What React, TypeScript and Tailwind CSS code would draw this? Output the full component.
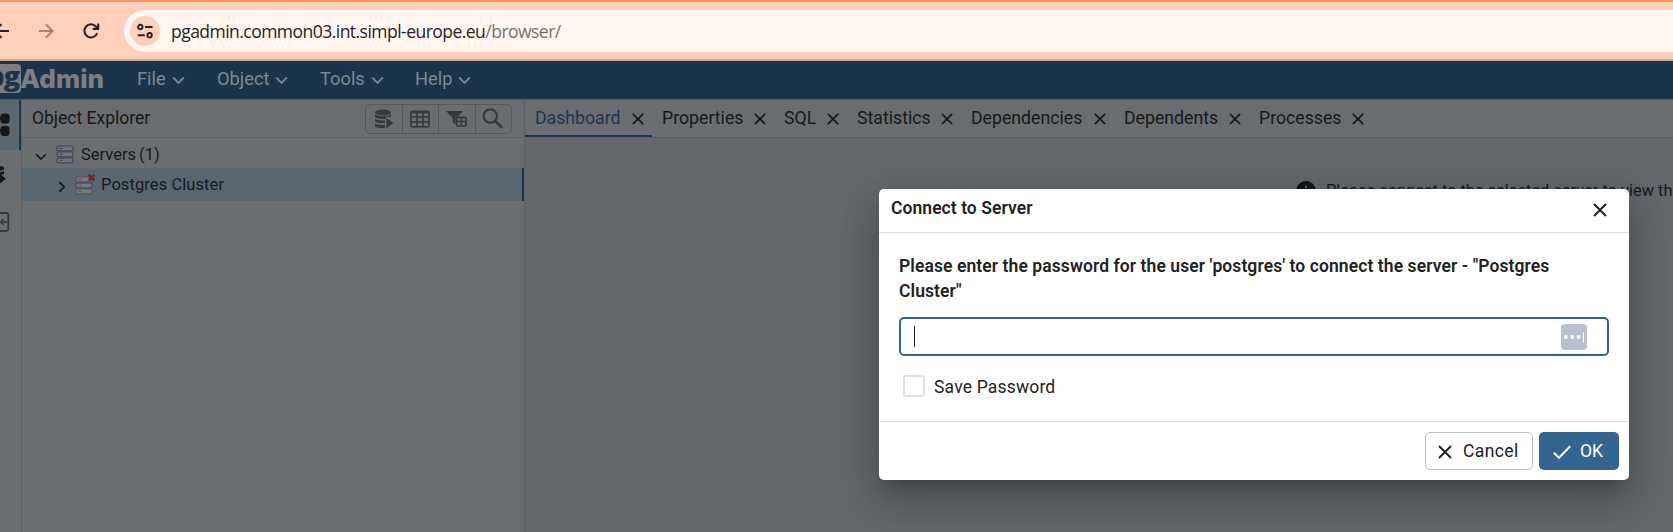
import type { ReactNode } from "react";

function Chevron({ className }: { className: string }) {
  return (
    <svg viewBox="0 0 14 9" className={className} fill="none" stroke="currentColor" strokeWidth="2">
      <path d="M1.3 1.3 7 7l5.7-5.7" />
    </svg>
  );
}

function Cross({ className }: { className: string }) {
  return (
    <svg viewBox="0 0 14 14" className={className} fill="none" stroke="currentColor" strokeWidth="2">
      <path d="M1 1l12 12M13 1 1 13" />
    </svg>
  );
}

function ServerStack({ className, disconnected }: { className: string; disconnected?: boolean }) {
  const edge = disconnected ? "#55565a" : "#45455a";
  return (
    <svg viewBox="0 0 18 19" className={className} fill="none">
      {[1, 7, 13].map((y, i) => (
        <g key={y}>
          <rect
            x="1"
            y={y}
            width="16"
            height="4.8"
            rx="1.6"
            fill={disconnected ? "#77797b" : "#70747e"}
            stroke={i === 1 ? "#45455a" : edge}
            strokeWidth="1.2"
          />
          <path d={`M3.5 ${y + 2.4}h3`} stroke={edge} strokeWidth="1.1" />
        </g>
      ))}
      {disconnected && (
        <path d="M13.800-1.200l5.600 5.600m0-5.600-5.600 5.600" stroke="#930f22" strokeWidth="2.500" />
      )}
    </svg>
  );
}

function BrowserBar() {
  return (
    <header className="flex h-[61px] shrink-0 items-start border-t-2 border-b-2 border-t-[#ff8f5c] border-b-[#cba797] bg-[#ffd0b9]">
      <div className="flex h-[57px] w-[124px] shrink-0 items-center">
        <svg viewBox="0 0 16 16" className="-ml-[7px] h-4 w-4" fill="none" stroke="#222426" strokeWidth="2">
          <path d="M16 8H2M8.5 1.2 1.7 8l6.8 6.8" />
        </svg>
        <svg viewBox="0 0 16 16" className="ml-[29px] h-4 w-4" fill="none" stroke="#a18579" strokeWidth="2">
          <path d="M1 8h13M7.8 1.2 14.6 8l-6.8 6.8" />
        </svg>
        <svg viewBox="0 0 18 18" className="ml-[28px] h-[18px] w-[18px]" fill="none" stroke="#222426" strokeWidth="2.1">
          <path d="M15.2 11.2A6.6 6.6 0 1 1 14 4.6L16 6.6" />
          <path d="M16.2 1.4v5.5h-5.5" />
        </svg>
      </div>
      <div className="mt-2 flex h-[42px] flex-1 items-center rounded-l-full bg-[#fff6f1] pl-[6px]">
        <span className="flex h-[30px] w-[30px] items-center justify-center rounded-full bg-[#ffd0b9]">
          <svg viewBox="0 0 16 16" className="h-4 w-4" fill="none" stroke="#222426" strokeWidth="1.9">
            <circle cx="3.3" cy="4" r="2.2" />
            <path d="M8 4h7.5M.8 12.2h7" />
            <circle cx="12.6" cy="12.2" r="2.2" />
          </svg>
        </span>
        <span className="ml-[11px] font-['Open_Sans','Noto_Sans',sans-serif] text-[17.5px] tracking-[-0.53px] whitespace-nowrap text-[#232323]">
          pgadmin.common03.int.simpl-europe.eu<span className="text-[#75706e]">/browser/</span>
        </span>
      </div>
    </header>
  );
}

function MenuItem({ label, width }: { label: string; width: string }) {
  return (
    <div className={`flex items-center gap-[6px] ${width}`}>
      <span>{label}</span>
      <Chevron className="mt-[3px] h-[9px] w-[13px]" />
    </div>
  );
}

function MenuBar() {
  return (
    <nav className="flex h-[38px] shrink-0 items-center bg-[#1b344a] pb-[3px] text-[18.3px] text-[#7f8991]">
      <div className="flex w-[137px] items-center">
        <span className="-ml-[20px] flex h-[29px] w-[41px] shrink-0 items-center justify-end rounded-[4px] bg-[#7b7f82] pr-[2px] font-['Open_Sans',sans-serif] text-[27px] leading-[20px] font-extrabold text-[#1b344a]">
          <span className="-mt-[5px] tracking-[-1px]">pg</span>
        </span>
        <span className="-ml-px font-['Inter','Lato',sans-serif] text-[26px] leading-[30px] font-extrabold tracking-[0.1px] text-[#7b7f82]">
          Admin
        </span>
      </div>
      <MenuItem label="File" width="w-[80px]" />
      <MenuItem label="Object" width="w-[103px]" />
      <MenuItem label="Tools" width="w-[95px]" />
      <MenuItem label="Help" width="w-[80px]" />
    </nav>
  );
}

function SideRail() {
  return (
    <aside className="w-[22px] shrink-0 overflow-hidden border-r border-[#5e6266]">
      <div className="flex h-[50px] items-center border-r-2 border-[#1b3750] bg-[#596870]">
        <svg viewBox="0 0 10 24" className="h-6 w-[10px]" fill="#131719">
          <rect x="0.5" y="0.5" width="9" height="10" rx="3" />
          <rect x="0.5" y="13" width="9" height="10" rx="3" />
          <path d="M0 4h2v3H0zM0 16h2v3H0z" />
        </svg>
      </div>
      <svg viewBox="0 0 8 20" className="mt-[15px] h-5 w-[8px]" fill="#131719">
        <path d="M0 1c2.500 0 4 .8 4 2.200S2.500 5.600 0 5.600zM0 7c2 0 3-.4 4-1.200v3.400L0 10zM0 9l6 4.800L0 18.500z" />
      </svg>
      <svg viewBox="0 0 10 20" className="mt-[27px] h-5 w-[10px]" fill="none" stroke="#35393b" strokeWidth="1.8">
        <path d="M0 1h6.500a1.800 1.800 0 0 1 1.800 1.800v14.400a1.800 1.800 0 0 1-1.800 1.800H0" />
        <path d="M7 10H1M3.600 7 .8 10l2.800 3" strokeWidth="1.500" />
      </svg>
    </aside>
  );
}

function ToolButton({ children }: { children: ReactNode }) {
  return (
    <span className="flex h-full flex-1 items-center justify-center border-l border-[#565a5d] first:border-l-0">
      {children}
    </span>
  );
}

function ObjectExplorer() {
  return (
    <section className="flex w-[503px] shrink-0 flex-col border-r border-[#5c6064]">
      <div className="flex h-[38px] items-center justify-between border-b border-[#5c6064] pr-3 pl-[10px]">
        <h2 className="-mt-px text-[17.5px] text-[#15191c]">Object Explorer</h2>
        <div className="flex h-[30px] w-[147px] rounded-[5px] border border-[#565a5d] text-[#34393c]">
          <ToolButton>
            <svg viewBox="0 0 20 20" className="h-5 w-5" fill="currentColor">
              <ellipse cx="9" cy="3.400" rx="8" ry="3" />
              <path d="M1 5.200c3 2.600 13 2.600 16 0v3.300l-5-1v2.200C8 10.200 3 9.700 1 8.200z" />
              <path d="M1 10c2 1.200 6 1.600 10 1.400v2.800c-4 .2-8-.3-10-1.500zM1 14.500c2 1.200 6 1.600 10 1.400V19c-4 .5-10-.2-10-2z" />
              <path d="M12.400 9l7 5-7 5.400z" />
            </svg>
          </ToolButton>
          <ToolButton>
            <svg viewBox="0 0 20 18" className="h-[18px] w-5" fill="none" stroke="currentColor" strokeWidth="1.600">
              <rect x="1" y="1.200" width="18" height="15.600" rx="1.400" />
              <path d="M1 2.200h18" strokeWidth="2.200" />
              <path d="M1 7h18M1 12h18M7 2v15M13 2v15" />
            </svg>
          </ToolButton>
          <ToolButton>
            <svg viewBox="0 0 21 18" className="h-[18px] w-[21px]" fill="none">
              <path d="M0 1h17l-5 5.500H9.600V15L6.600 12V8z" fill="currentColor" />
              <rect x="10.600" y="7.400" width="9.400" height="8.600" rx="1" fill="#6a6e71" stroke="currentColor" strokeWidth="1.700" />
              <path d="M10.600 11.600H20M15.300 8v8" stroke="currentColor" strokeWidth="1.500" />
            </svg>
          </ToolButton>
          <ToolButton>
            <svg viewBox="0 0 21 21" className="-mt-px mr-[2px] h-[21px] w-[21px]" fill="none" stroke="currentColor" strokeWidth="2.200">
              <circle cx="8.300" cy="8" r="6.700" />
              <path d="M13 12.700l7 7" strokeWidth="2.800" />
            </svg>
          </ToolButton>
        </div>
      </div>
      <div className="flex flex-col text-[16.5px] text-[#15191c]">
        <div className="flex h-[30px] items-center pt-[3px] pl-[13px]">
          <Chevron className="mt-[4px] h-[8px] w-[12px]" />
          <ServerStack className="ml-[9px] h-[19px] w-[18px]" />
          <span className="mt-px ml-[7px]">Servers</span>
          <span className="mt-px ml-[3px]">(1)</span>
        </div>
        <div className="flex h-[33px] items-center border-r-2 border-[#1b3750] bg-[#596870] pl-5">
          <span className="h-full w-[14px] border-l border-[#5c656d]" />
          <Chevron className="mt-[4px] h-[8px] w-[12px] -rotate-90" />
          <ServerStack className="mt-[2px] ml-[7px] h-[19px] w-[18px] overflow-visible" disconnected />
          <span className="mt-px ml-[8px] tracking-[0.08px]">Postgres Cluster</span>
        </div>
      </div>
    </section>
  );
}

const tabs = [
  { label: "Dashboard", width: "w-[127px]", active: true },
  { label: "Properties", width: "w-[122px]" },
  { label: "SQL", width: "w-[73px]" },
  { label: "Statistics", width: "w-[114px]" },
  { label: "Dependencies", width: "w-[153px]" },
  { label: "Dependents", width: "w-[135px]" },
  { label: "Processes", width: "w-[123px]" },
];

function Workspace() {
  return (
    <main className="flex min-w-0 flex-1 flex-col">
      <div className="flex h-[38px] shrink-0 border-b border-[#5c6064] text-[17.7px] text-[#15191c]">
        {tabs.map((tab) => (
          <div
            key={tab.label}
            className={`flex h-[37px] shrink-0 items-center justify-between border-b-2 pt-px pr-2 pl-[10px] ${tab.width} ${
              tab.active ? "border-[#1b3750]" : "border-transparent"
            }`}
          >
            <span className={tab.active ? "text-[#1b3750]" : ""}>{tab.label}</span>
            <Cross className="mt-[2px] h-[12px] w-[12px]" />
          </div>
        ))}
      </div>
      <div className="flex flex-1 items-start bg-[#64686d] pt-[42px] pl-[771px] text-[16.4px] whitespace-nowrap text-[#15191c]">
        <svg viewBox="0 0 20 20" className="mt-[1px] h-5 w-5 shrink-0" fill="#131719">
          <circle cx="10" cy="10" r="10" />
          <path d="M9 5h2v2H9zM9 9h2v6H9z" fill="#64686d" />
        </svg>
        <span className="ml-[10px] leading-[21px]">Please connect to the selected server to view th</span>
      </div>
    </main>
  );
}

function ConnectDialog() {
  return (
    <div
      role="dialog"
      className="absolute top-[189px] left-[879px] flex h-[291px] w-[750px] flex-col rounded-[5px] bg-white text-[17.5px] text-[#222] shadow-[0_11px_15px_-7px_rgba(0,0,0,0.2),0_24px_38px_3px_rgba(0,0,0,0.14),0_9px_46px_8px_rgba(0,0,0,0.12)]"
    >
      <div className="flex h-[44px] shrink-0 items-center justify-between border-b border-[#dde0e6] pr-[22px] pl-[12px]">
        <h1 className="-mt-[4px] text-[17.5px] font-semibold tracking-[0.06px]">Connect to Server</h1>
        <Cross className="-mt-px h-[14px] w-[14px]" />
      </div>
      <div className="flex flex-1 flex-col px-5 pt-[21px]">
        <p className="leading-[25px] font-semibold tracking-[0.085px]">
          Please enter the password for the user 'postgres' to connect the server - "Postgres
          <br />
          Cluster"
        </p>
        <div className="mt-[13px] flex h-[39px] items-center justify-between rounded-[5px] border-2 border-[#326690] pr-5 pl-[13px]">
          <span className="h-[21px] w-px bg-[#222]" />
          <svg viewBox="0 0 26 26" className="h-[26px] w-[26px]">
            <rect width="26" height="26" rx="4" fill="#bac1cd" />
            <g fill="#fff">
              <circle cx="4.800" cy="13" r="1.900" />
              <circle cx="11.200" cy="13" r="1.900" />
              <circle cx="17.500" cy="13" r="1.900" />
              <rect x="22" y="8" width="1" height="10.500" />
            </g>
          </svg>
        </div>
        <label className="mt-[19px] flex h-[22px] items-center pl-1">
          <span className="h-[22px] w-[22px] rounded-[3px] border-2 border-[#dde0e6]" />
          <span className="mt-[2px] ml-[9px] tracking-[0.18px]">Save Password</span>
        </label>
      </div>
      <div className="flex h-[59px] shrink-0 items-center justify-end gap-[6px] border-t border-[#dde0e6] pr-[10px]">
        <button className="flex h-[38px] w-[108px] items-center rounded-[5px] border border-[#bac1cd] pl-[12px]">
          <Cross className="mt-px h-[14px] w-[14px]" />
          <span className="ml-[11px] tracking-[0.4px]">Cancel</span>
        </button>
        <button className="flex h-[38px] w-[80px] items-center rounded-[5px] bg-[#326690] pl-[14px] text-white">
          <svg viewBox="0 0 18 14" className="mt-[2px] h-[14px] w-[18px]" fill="none" stroke="currentColor" strokeWidth="2">
            <path d="M.8 7.800 6 12.800 17.200 1.200" />
          </svg>
          <span className="ml-[9px]">OK</span>
        </button>
      </div>
    </div>
  );
}

export default function App() {
  return (
    <div className="relative flex h-[532px] w-[1673px] flex-col overflow-hidden bg-[#6a6e71] font-['Roboto',sans-serif]">
      <BrowserBar />
      <MenuBar />
      <div className="flex min-h-0 flex-1 border-t border-[#4a5962]">
        <SideRail />
        <ObjectExplorer />
        <Workspace />
      </div>
      <ConnectDialog />
    </div>
  );
}
